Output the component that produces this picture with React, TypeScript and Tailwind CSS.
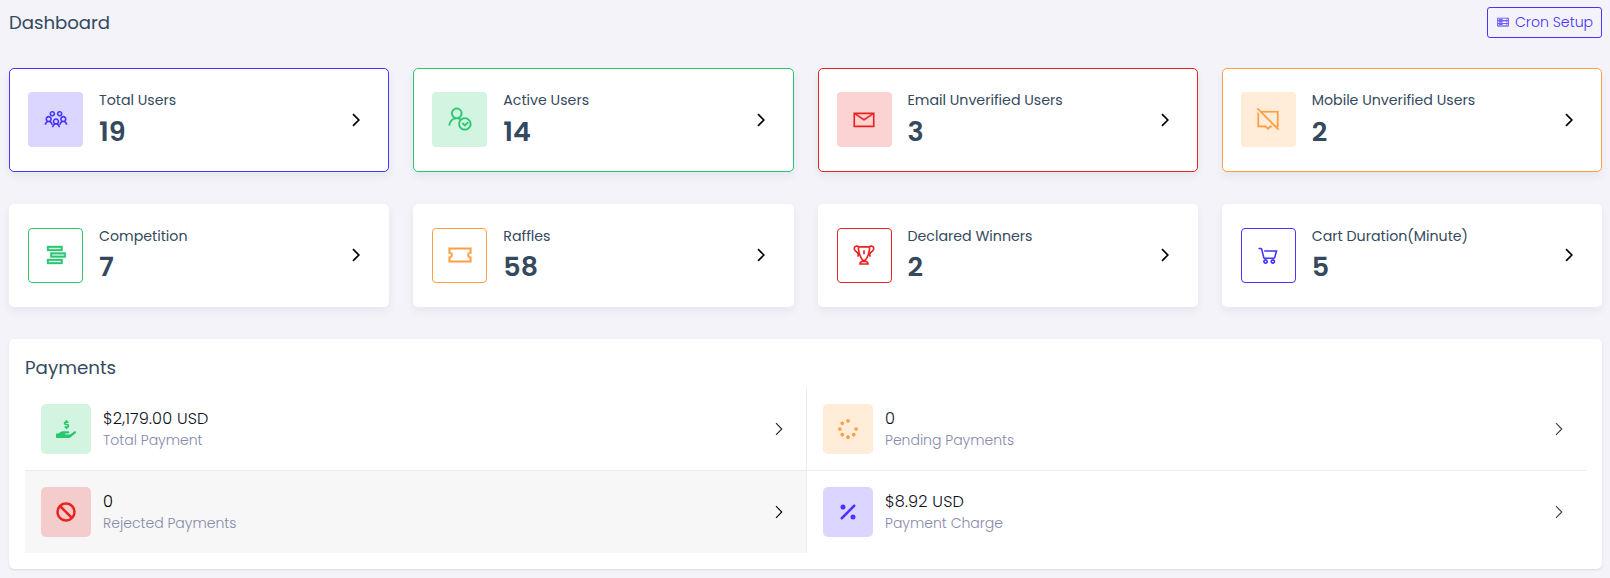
import type { ReactNode } from "react";
import {
  LiaUsersSolid,
  LiaUserCheckSolid,
  LiaEnvelopeSolid,
  LiaCommentSlashSolid,
  LiaStreamSolid,
  LiaTicketAltSolid,
  LiaTrophySolid,
  LiaShoppingCartSolid,
  LiaServerSolid,
} from "react-icons/lia";
import { FaHandHoldingUsd, FaSpinner, FaBan } from "react-icons/fa";
import { FaPercent } from "react-icons/fa6";

function Chevron({ className }: { className: string }) {
  return (
    <svg viewBox="0 0 8 14" fill="none" stroke="currentColor" className={className}>
      <path d="M1 1.2 6.8 7 1 12.8" />
    </svg>
  );
}

type Stat = { label: string; value: string; icon: ReactNode; outlined: boolean; border: string; box: string };

const stats: Stat[] = [
  { label: "Total Users", value: "19", icon: <LiaUsersSolid />, outlined: true, border: "border-[#4634ff]", box: "bg-[#dad6ff] text-[#4634ff]" },
  { label: "Active Users", value: "14", icon: <LiaUserCheckSolid className="stroke-[0.3]" />, outlined: true, border: "border-[#28c76f]", box: "bg-[#d4f4e2] text-[#28c76f]" },
  { label: "Email Unverified Users", value: "3", icon: <LiaEnvelopeSolid />, outlined: true, border: "border-[#eb2222]", box: "bg-[#fbd3d3] text-[#eb2222]" },
  { label: "Mobile Unverified Users", value: "2", icon: <LiaCommentSlashSolid className="stroke-[0.2]" />, outlined: true, border: "border-[#ff9f43]", box: "bg-[#ffecd9] text-[#ff9f43]" },
  { label: "Competition", value: "7", icon: <LiaStreamSolid className="stroke-[0.5]" />, outlined: false, border: "border-[#28c76f]", box: "text-[#28c76f]" },
  { label: "Raffles", value: "58", icon: <LiaTicketAltSolid className="stroke-[0.5]" />, outlined: false, border: "border-[#ff9f43]", box: "text-[#ff9f43]" },
  { label: "Declared Winners", value: "2", icon: <LiaTrophySolid />, outlined: false, border: "border-[#eb2222]", box: "text-[#eb2222]" },
  { label: "Cart Duration(Minute)", value: "5", icon: <LiaShoppingCartSolid />, outlined: false, border: "border-[#4634ff]", box: "text-[#4634ff]" },
];

function StatCard({ stat }: { stat: Stat }) {
  const o = stat.outlined;
  return (
    <a
      className={`flex items-start rounded-[5px] bg-white shadow-[0_4px_10px_rgba(18,38,63,0.06)] ${
        o ? `h-[104px] border px-[18px] pt-[23px] ${stat.border}` : "h-[103px] px-[19px] pt-6"
      }`}
    >
      <span
        className={`flex size-[55px] shrink-0 items-center justify-center rounded-[4px] pb-[2px] text-[26px] ${stat.box} ${
          o ? "" : `border ${stat.border}`
        }`}
      >
        {stat.icon}
      </span>
      <span className="-mt-[3px] ml-4 flex flex-col text-[#34495e]">
        <span className="text-[14.2px] leading-[22px] whitespace-nowrap">{stat.label}</span>
        <span className={`text-[27px] leading-[33px] font-semibold ${o ? "mt-1" : "mt-[3px]"}`}>{stat.value}</span>
      </span>
      <Chevron className={`mr-[10px] ml-auto h-[14px] w-2 stroke-[1.7] text-black ${o ? "mt-[21px]" : "mt-5"}`} />
    </a>
  );
}

type Payment = { amount: string; label: string; icon: ReactNode; cell: string; box: string; text: string; arrow: string };

const payments: Payment[] = [
  { amount: "$2,179.00 USD", label: "Total Payment", icon: <FaHandHoldingUsd />, cell: "h-[83px] border-r border-b", box: "bg-[#d4f4e2] text-[#28c76f]", text: "text-[#0c1022]", arrow: "text-[#222222]" },
  { amount: "0", label: "Pending Payments", icon: <FaSpinner />, cell: "h-[83px] border-b", box: "bg-[#ffecd9] text-[#ff9f43]", text: "text-[#0c1022]", arrow: "text-[#3c3c3c]" },
  { amount: "0", label: "Rejected Payments", icon: <FaBan />, cell: "h-[82px] border-r bg-[#f7f7f7]", box: "bg-[#f5cccc] text-[#eb2222]", text: "text-black", arrow: "text-black" },
  { amount: "$8.92 USD", label: "Payment Charge", icon: <FaPercent />, cell: "h-[82px]", box: "bg-[#dad6ff] text-[#4634ff]", text: "text-[#0c1022]", arrow: "text-[#3c3c3c]" },
];

function PaymentCell({ item }: { item: Payment }) {
  return (
    <a className={`flex items-center border-[#ebebf2] px-4 ${item.cell}`}>
      <span className={`flex size-[50px] shrink-0 items-center justify-center rounded-[5px] text-[20px] ${item.box}`}>{item.icon}</span>
      <span className="ml-3 flex flex-col font-light whitespace-nowrap">
        <span className={`mt-px text-[16.1px] leading-[22px] tracking-[0.18px] ${item.text}`}>{item.amount}</span>
        <span className="text-[14px] leading-[21px] text-[#8589ac]">{item.label}</span>
      </span>
      <Chevron className={`mr-[7px] ml-auto h-[14px] w-2 stroke-[1.1] ${item.arrow}`} />
    </a>
  );
}

export default function App() {
  return (
    <div className="h-[578px] w-[1610px] overflow-hidden bg-[#f3f3f9] pr-2 pl-[9px] font-['Poppins','Inter',sans-serif]">
      <header className="flex h-[68px] items-start justify-between pt-[7px]">
        <h1 className="mt-[2px] text-[18.1px] leading-7 text-[#34495e]">Dashboard</h1>
        <a className="flex h-[31px] w-[115px] items-center rounded-[3px] border border-[#4634ff] pl-[8px] text-[#4634ff]">
          <LiaServerSolid className="mb-[2px] size-[14px]" />
          <span className="mb-px ml-[5px] text-[14.1px] leading-5 font-light whitespace-nowrap">Cron Setup</span>
        </a>
      </header>
      <section className="grid grid-cols-4 gap-x-6 gap-y-8">
        {stats.map((s) => (
          <StatCard key={s.label} stat={s} />
        ))}
      </section>
      <section className="mt-8 h-[230px] rounded-[5px] bg-white px-4 pt-[15px] shadow-[0_1px_2px_rgba(56,65,74,0.15)]">
        <h2 className="h-[34px] text-[18.25px] leading-7 text-[#34495e]">Payments</h2>
        <div className="grid grid-cols-[782px_1fr]">
          {payments.map((p) => (
            <PaymentCell key={p.label} item={p} />
          ))}
        </div>
      </section>
    </div>
  );
}
